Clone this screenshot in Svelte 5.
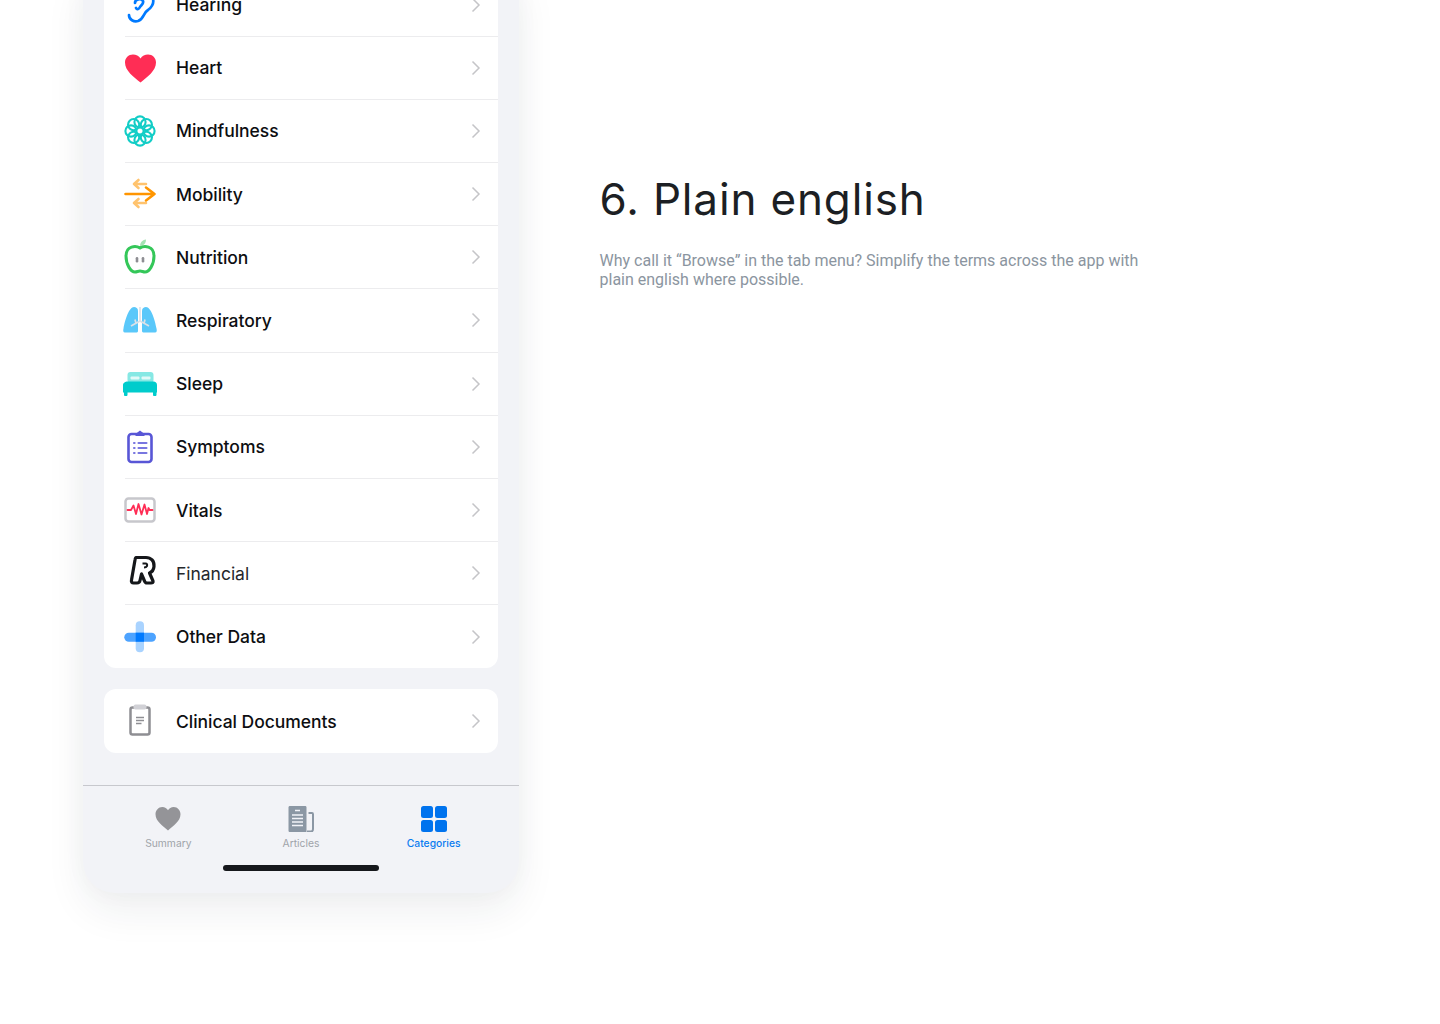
<script>
  const rows = ['Hearing','Heart','Mindfulness','Mobility','Nutrition','Respiratory','Sleep','Symptoms','Vitals','Financial','Other Data'];
  const petals = [0,45,90,135,180,225,270,315];
</script>

{#snippet chevron()}
  <svg class="chev" width="10" height="16" viewBox="0 0 10 16"><path d="M1.5 1.5 8 8l-6.500 6.500" fill="none" stroke="#c5c5c8" stroke-width="1.500"/></svg>
{/snippet}

{#snippet icon(name)}
  <svg class="ico" width="32" height="32" viewBox="0 0 32 32">
    {#if name === 'Hearing'}
      <g fill="none" stroke="#007aff" stroke-width="2.700" stroke-linecap="round">
        <path d="M5 26c0 5 5 7 9 6 6-2 5-8 10-11 4-3 6-7 5-11C27 3 19 1 13 4"/>
        <path d="M11 14c0-4 6-5 8-2 1 3-2 4-3 6-1 2-3 3-4 1"/>
      </g>
    {:else if name === 'Heart'}
      <path fill="#ff2d55" d="M16.500 30.500C10 25 1 19 1 10.500 1 6 4.500 2.500 9 2.500c3 0 6 1.500 7.500 4 1.500-2.500 4.500-4 7.500-4 4.500 0 8 3.500 8 8 0 8.500-9 14.500-15.500 20z"/>
    {:else if name === 'Mindfulness'}
      <g fill="none" stroke="#12cdc6" stroke-width="2.100">
        {#each petals as a}
          <ellipse cx="16" cy="7" rx="5.600" ry="5.600" transform="rotate({a} 16 16)"/>
        {/each}
      </g>
    {:else if name === 'Mobility'}
      <g fill="none" stroke-width="2.600" stroke-linecap="round" stroke-linejoin="round">
        <path stroke="#ffc36e" d="M22 6H10M14.500 2 10 6l4.500 4M22 25H10M14.500 21 10 25l4.500 4"/>
        <path stroke="#ff9500" d="M1.500 16h29M22 9.500l8.500 6.500-8.500 6.500"/>
      </g>
    {:else if name === 'Nutrition'}
      <path fill="#a5e3b4" d="M16 5c0-3 2-6 6-6.500C22 2 20 5 16 5z"/>
      <path fill="none" stroke="#34c759" stroke-width="3" d="M16 7C12 4.500 2 4.500 2 15c0 9 5 16 9 16 2 0 3-1 5-1s3 1 5 1c4 0 9-7 9-16C30 4.500 20 4.500 16 7z"/>
      <rect x="11.700" y="16" width="2.600" height="5.500" rx="1.300" fill="#8e8e93"/><rect x="17.700" y="16" width="2.600" height="5.500" rx="1.300" fill="#8e8e93"/>
    {:else if name === 'Respiratory'}
      <path fill="#5ac8fa" d="M10 3c2 0 4 1 4 4v20c0 1-1 1.500-2 1.500H1c-2 0-2-2-1.500-4C1 16 5 3 10 3z"/>
      <path fill="#5ac8fa" d="M22 3c-2 0-4 1-4 4v20c0 1 1 1.500 2 1.500h11c2 0 2-2 1.500-4C31 16 27 3 22 3z"/>
      <path fill="none" stroke="#dbe1e8" stroke-width="1.700" d="M16 3v14l-9 5m9-5 9 5M11 15.500l1 4M21 15.500l-1 4"/>
    {:else if name === 'Sleep'}
      <rect x="3.500" y="4" width="26" height="11" rx="3" fill="#86e8e4"/>
      <rect x="6.500" y="8.500" width="9" height="3" rx="1" fill="#e2f9f8"/><rect x="17.500" y="8.500" width="9" height="3" rx="1" fill="#e2f9f8"/>
      <path fill="#00cccc" d="M3.500 13.500h26c2 0 3.500 1.500 3.500 3.500v7.500h-.5V27c0 .5-.5 1-1 1h-1.500c-.5 0-1-.5-1-1v-2.500H3.500V27c0 .5-.5 1-1 1H1c-.5 0-1-.5-1-1v-2.500h-1V17c0-2 2.500-3.500 4.500-3.500z"/>
    {:else if name === 'Symptoms'}
      <path fill="#5856d6" d="M11.500 3 16-.5 20.500 3v2h-9z"/>
      <rect x="4.500" y="3" width="23" height="28" rx="3" fill="none" stroke="#5856d6" stroke-width="2.600"/>
      <g stroke="#7876e0" stroke-width="2.100" stroke-linecap="round">
        <path d="M10 12h.6M10 17h.6M10 22h.6M14.500 12h8M14.500 17h8M14.500 22h8"/>
      </g>
    {:else if name === 'Vitals'}
      <rect x="1.500" y="4.500" width="29" height="23" rx="3" fill="#fff" stroke="#c7c7cc" stroke-width="2.500"/>
      <path fill="none" stroke="#ff2d55" stroke-width="1.800" stroke-linejoin="round" stroke-linecap="round" d="M3.500 16H7l2.500-4.500L12 20l2.500-10 3 10.500 3-10 2.500 9.500 1.500-6 1 2h3"/>
    {:else if name === 'Financial'}
      <path fill="#fff" stroke="#15171a" stroke-width="3.200" stroke-linejoin="round" d="M12 .5h10c5 0 8.500 3.500 8 9-.3 3-2 5.500-4.500 6.500l3.500 8c.5 1.500-.5 2-2 2h-4c-1.500 0-2-.5-2.500-2L17.500 17 16 23.500c-.4 2-1.500 2.500-3 2.500H9.500c-1.500 0-2.500-1-2-3L11 3c.2-1.500.5-2.500 1-2.500z"/>
      <path fill="none" stroke="#15171a" stroke-width="2" d="M18.500 6.500h3c1.500 0 2 1 1.500 2.500-.5 1-1.500 1.500-3 1.500"/>
    {:else if name === 'Other Data'}
      <rect x="11.700" y=".3" width="8.300" height="31" rx="4" fill="#a9d3ff"/>
      <rect x=".3" y="11.700" width="31.700" height="9" rx="4.500" fill="#4da3ff"/>
      <rect x="11.700" y="11.700" width="8.300" height="9" fill="#007aff"/>
    {:else}
      <rect x="6.500" y="2.500" width="19" height="27" rx="2" fill="#fff" stroke="#8e8e93" stroke-width="2.500"/>
      <rect x="9.500" y="-.5" width="13" height="5" rx="2" fill="#d1d1d6"/>
      <path stroke="#8e8e93" stroke-width="1.700" d="M12 12.500h8M12 15.500h8M12 18.500h5.500"/>
    {/if}
  </svg>
{/snippet}

<main class="page">
  <section class="phone">
    <ul class="card">
      {#each rows as r}
        <li class="row" class:plain={r === 'Financial'}>
          {@render icon(r)}
          <span class="label">{r}</span>
          {@render chevron()}
        </li>
      {/each}
    </ul>
    <ul class="card second">
      <li class="row">
        {@render icon('Clinical Documents')}
        <span class="label">Clinical Documents</span>
        {@render chevron()}
      </li>
    </ul>
    <nav class="tabs">
      <div class="tab">
        <svg width="26" height="26" viewBox="0 0 26 26"><path fill="#949498" d="M13 24.500C8 20 .500 15.500 .500 8.300.500 4.300 3.500 1 7.300 1 9.800 1 12 2.300 13 4.300 14 2.300 16.200 1 18.700 1c3.800 0 6.800 3.300 6.800 7.300 0 7.200-7.500 11.700-12.500 16.200z"/></svg>
        <span>Summary</span>
      </div>
      <div class="tab">
        <svg width="26" height="26" viewBox="0 0 26 26">
          <path fill="#8b97a4" d="M2 0h15c1 0 1.500.5 1.500 1.500V26H2c-1 0-1.500-.5-1.500-1.500v-23C.500.500 1 0 2 0z"/>
          <path fill="none" stroke="#8b97a4" stroke-width="2" d="M20.500 7h3.500c.7 0 1 .5 1 1.200V23c0 1.500-.8 2.500-2.100 2.500H19"/>
          <path stroke="#f2f3f8" stroke-width="1.400" d="M7 4.500h5M4 9h11M4 12.500h11M4 16h11M4 19.500h11"/>
        </svg>
        <span>Articles</span>
      </div>
      <div class="tab active">
        <svg width="26" height="26" viewBox="0 0 26 26" fill="#0073ee">
          <rect x="0" y="0" width="12" height="12" rx="2.500"/><rect x="14" y="0" width="12" height="12" rx="2.500"/>
          <rect x="0" y="14" width="12" height="12" rx="2.500"/><rect x="14" y="14" width="12" height="12" rx="2.500"/>
        </svg>
        <span>Categories</span>
      </div>
    </nav>
    <div class="home"></div>
  </section>
  <section class="copy">
    <h1>6. Plain english</h1>
    <p>Why call it “Browse” in the tab menu? Simplify the terms across the app with plain english where possible.</p>
  </section>
</main>

<style>
  :global(body) { background: #fff; }
  .page { display: flex; align-items: flex-start; height: 1024px; overflow: hidden; padding-left: 83px; box-sizing: border-box; }
  .phone { flex: none; width: 436px; margin-top: -26.600px; background: #f2f3f7; border-radius: 0 0 32px 32px; box-shadow: 0 18px 40px rgba(30, 40, 60, .07), 0 0 24px rgba(30, 40, 60, .03); }
  ul { list-style: none; margin: 0 21px; padding: 0; background: #fff; border-radius: 12px; }
  .second { margin-top: 21px; }
  .row { display: flex; align-items: center; height: 63.200px; box-sizing: border-box; margin-left: 21px; padding-right: 17px; border-bottom: 1.500px solid #ececee; font: 550 17.500px "Inter", sans-serif; color: #0d0e11; }
  .card li:last-child { border-bottom: 0; }
  .ico { flex: none; margin-left: -1px; overflow: visible; }
  .label { flex: 1; margin-left: 20px; letter-spacing: -.03px; }
  .plain { font-weight: 400; color: #26282c; }
  .chev { flex: none; }
  .tabs { display: grid; grid-template-columns: repeat(3, 1fr); margin-top: 32.100px; padding: 20.300px 19px 0; border-top: 1.500px solid #c7c8cd; }
  .tab { display: flex; flex-direction: column; align-items: center; gap: 4px; font: 400 10.300px/14px "Inter", sans-serif; color: #a0a3a9; }
  .tab svg { display: block; }
  .tab.active { color: #0a7cf0; font-weight: 500; }
  .home { width: 156px; height: 6px; margin: 15px auto 0; background: #16181c; border-radius: 3px; }
  .phone::after { content: ""; display: block; height: 22px; }
  .copy { margin: 172px 0 0 80.500px; width: 560px; }
  h1 { margin: 0; font: 400 44px/54px "Inter", sans-serif; letter-spacing: .850px; color: #1c1f24; }
  p { margin: 25px 0 0; font: 400 16px/19px "Roboto", sans-serif; color: #8b95a0; }
</style>
